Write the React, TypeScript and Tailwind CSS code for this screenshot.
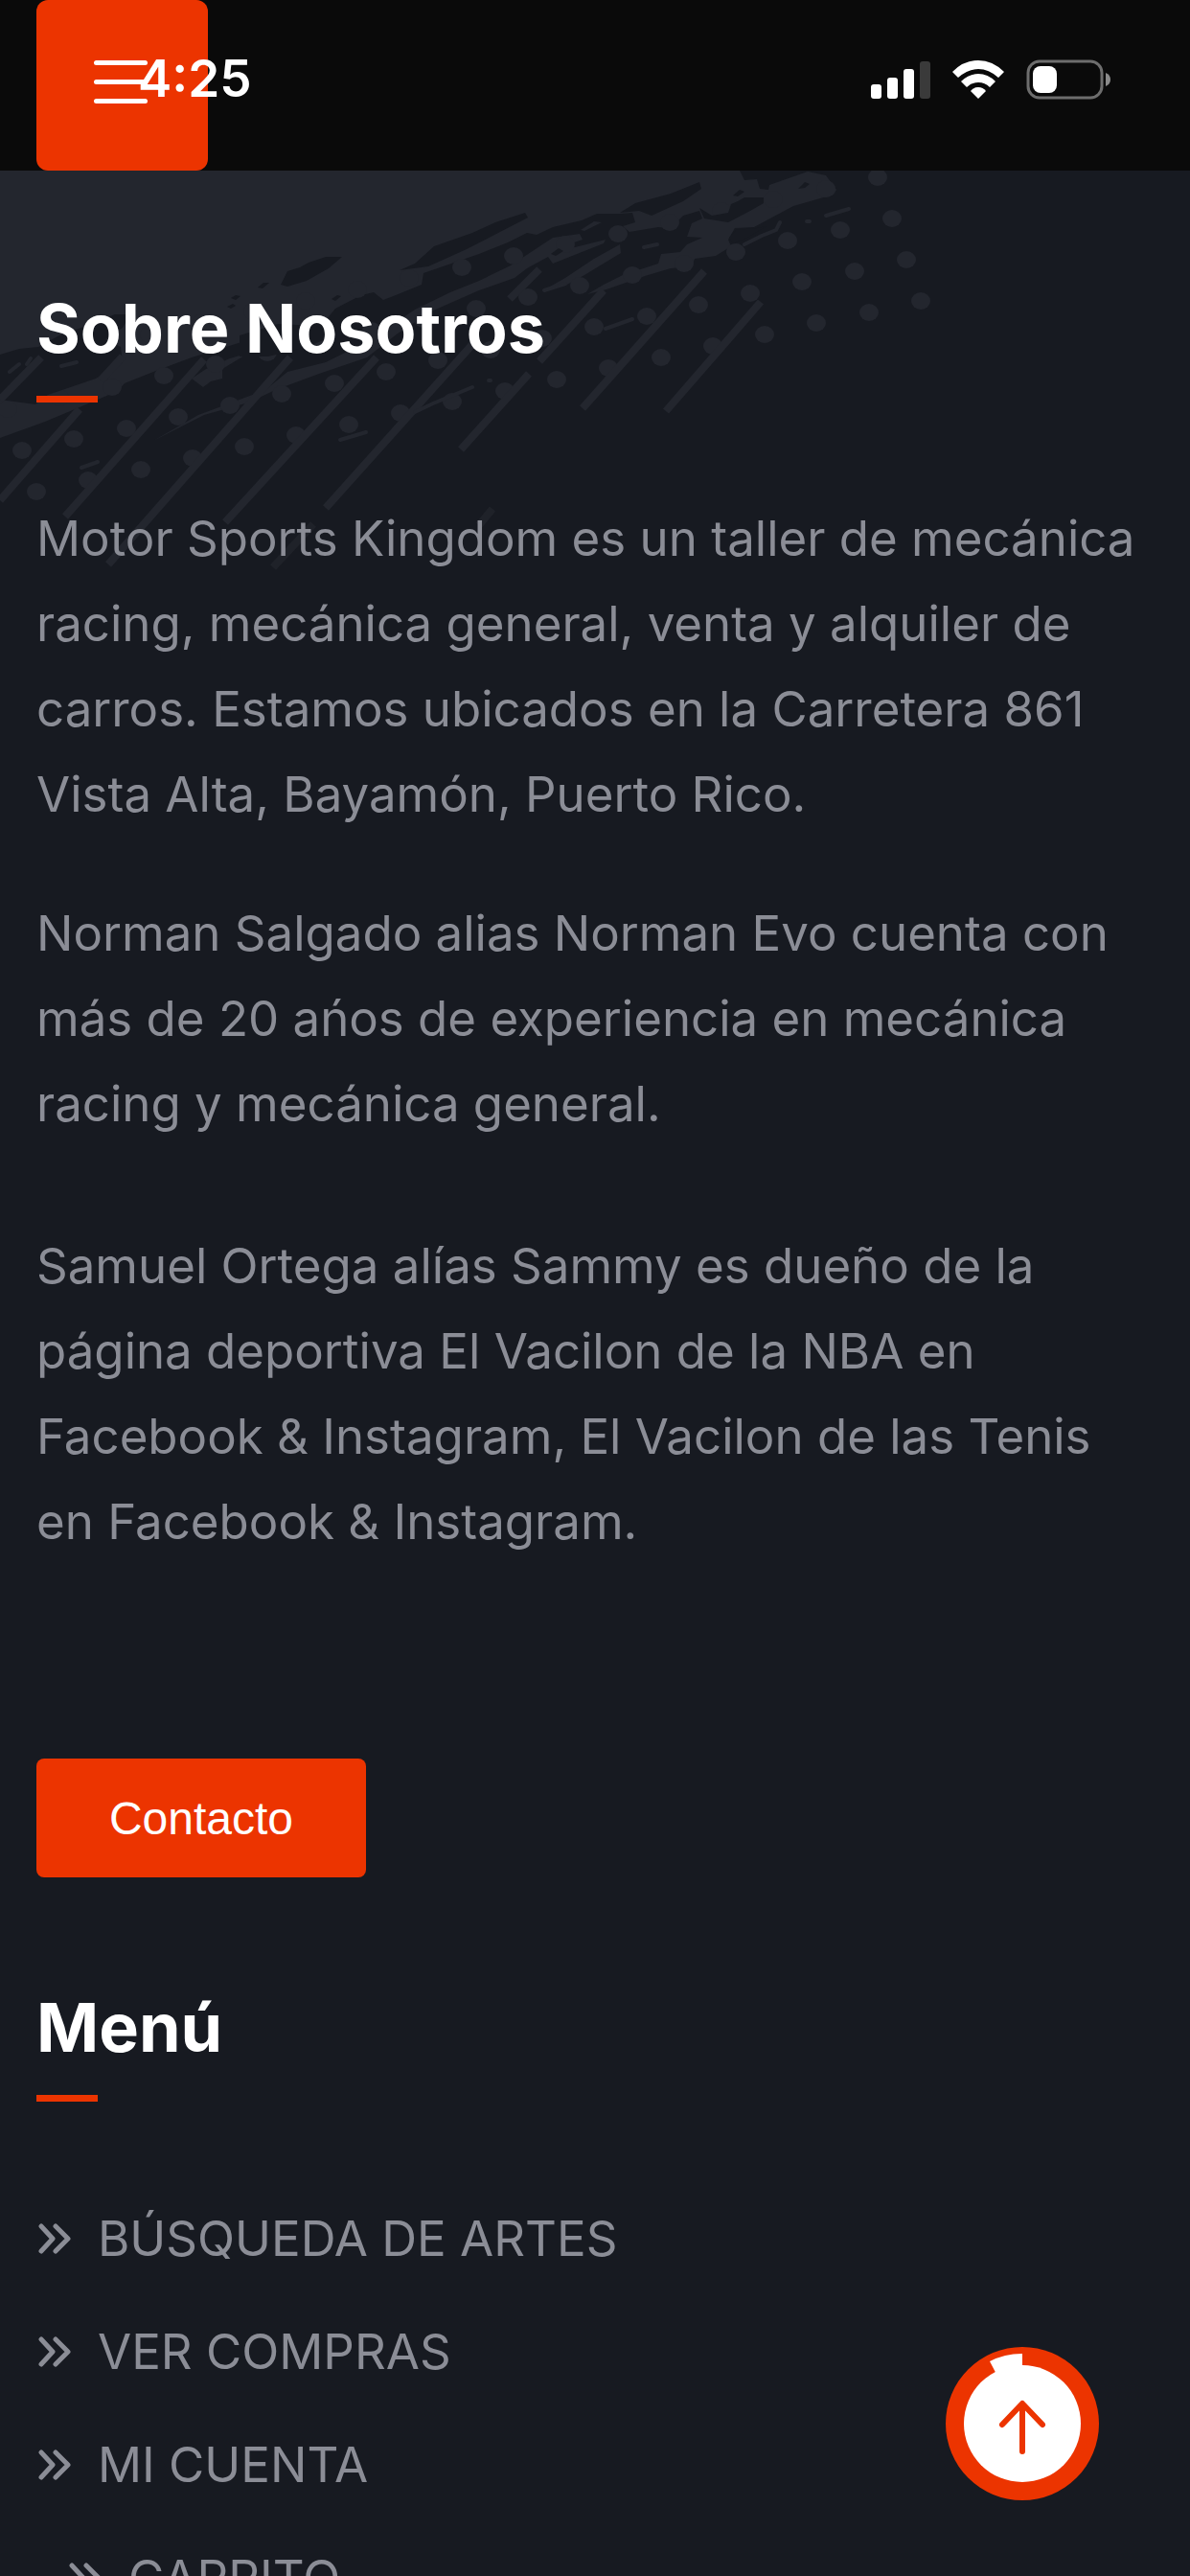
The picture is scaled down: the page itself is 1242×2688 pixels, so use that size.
import type { ReactNode } from "react";

const menuItems = [
  { label: "BÚSQUEDA DE ARTES", nested: false },
  { label: "VER COMPRAS", nested: false },
  { label: "MI CUENTA", nested: false },
  { label: "CARRITO", nested: true },
];

// Halftone grid: four rows of dots running down to the left
const dots = [0, 1, 2, 3].flatMap((row) =>
  Array.from({ length: 18 }, (_, i) => ({
    x: Math.round(961 - row * 15 - i * 54.3),
    y: Math.round(314 - row * 43 + i * 11.7),
  }))
);

const TireTexture = () => (
  <svg
    className="pointer-events-none absolute left-0 top-0 h-[430px] w-[980px]"
    viewBox="0 178 980 430"
    fill="none"
    aria-hidden="true"
  >
    <g fill="#23262e">
      <path d="M0 178H772L777 188 790 187 793 197 802 198 803 193 843 179 862 183 873 198 870 203 828 215 800 230 787 237 767 238 760 250 763 257 747 267 725 270 722 278 700 280 673 288 633 302 613 307 630 297 650 287 687 275 690 265 710 263 717 255 733 248 717 247 722 233 733 228 730 220 713 225 700 238 687 237 657 242 650 236 663 232 660 222 647 223 623 223 607 230 577 237 560 245 550 243 530 253 500 265 442 285 440 297 413 308 400 313 390 305 377 308 350 322 340 334 300 345 262 354 236 362 200 373 160 388 130 400 123 408 90 422 47 440 0 457Z" />
      <path d="M160 460 207 433 250 417 277 407 300 388 340 378 372 362 400 345 433 323 470 305 500 293 533 277 577 248 605 244 608 250 590 256 600 258 632 250 630 254 577 275 572 268 550 280 537 290 500 303 450 325 415 348 383 373 333 390 287 407 260 420 213 433Z" />
      <path d="M567 303 590 290 620 270 647 255 648 264 610 287 590 298Z" />
      <path d="M606 240 620 231 628 232 610 241Z" />
      <path d="M200 395 215 385 240 374 260 368 232 385 232 395 220 398 212 404Z" />
      {dots.map((dot) => (
        <ellipse key={`${dot.x}-${dot.y}`} cx={dot.x} cy={dot.y} rx="10" ry="9" />
      ))}
    </g>
    <g fill="#171a21">
      <path d="M417 282 433 275 453 257 493 243 517 232 548 222 551 227 520 243 487 260 447 278Z" />
      <path d="M647 222 663 212 700 202 730 190 732 197 713 210 680 225 667 220Z" />
      <path d="M730 217 743 225 760 222 763 213 770 210 777 206 797 206 797 212 783 220 760 232 735 228Z" />
      <path d="M765 204 772 198 777 200 770 205Z" />
      <path d="M833 197 840 190 845 192 840 196Z" />
      <path d="M761 248 768 240 790 238 800 236 780 248 765 254Z" />
      <path d="M575 265 583 259 588 262 580 267Z" />
      <path d="M293 297 300 283 313 279 322 274 340 268 357 268 343 280 320 293 300 299Z" />
      <path d="M269 300 275 295 281 295 274 301Z" />
      <path d="M241 311 246 308 251 309 246 313Z" />
      <path d="M237 320 243 317 246 319 241 322Z" />
      <path d="M346 312 352 308 356 309 350 314Z" />
      <path d="M0 370 20 364 40 362 62 350 90 340 120 328 136 328 128 342 110 354 126 362 128 378 100 395 50 412 37 422 0 417Z" />
      <path d="M250 350 290 338 330 340 350 350 320 362 280 372 250 372Z" />
    </g>
    <g stroke="#23262e" strokeWidth="8" strokeLinecap="butt">
      <path d="M735 283 608 426M794 315 695 429M630 303 563 377M552 390 481 469M563 281 532 312M393 373 235 545M497 355 340 530M303 373 113 589M213 375 68 539M83 427 0 522M43 373 0 417M128 372 105 397" />
      <path d="M327 547 285 592M514 531 500 548" opacity="0.7" />
    </g>
    <g stroke="#23262e" strokeWidth="4" strokeLinecap="round">
      <path d="M355 459 382 451M433 430 452 421 493 404M632 343 660 333M862 225 886 218M777 255 795 246 810 240 814 232M672 258 686 255M85 488 102 482M568 303 590 296M10 388 20 380M28 380 32 374M64 382 80 378M842 231 845 231M510 397 512 397" />
    </g>
  </svg>
);

const SignalIcon = () => (
  <svg className="h-[42px] w-[62px]" viewBox="0 0 62 42" fill="#fff" aria-hidden="true">
    <rect x="0" y="26" width="11" height="15" rx="3" />
    <rect x="17" y="19" width="11" height="22" rx="3" />
    <rect x="34" y="10" width="11" height="31" rx="3" />
    <rect x="51" y="2" width="11" height="39" rx="3" fill="#3a3a3a" />
  </svg>
);

const WifiIcon = () => (
  <svg className="h-[42px] w-[54px]" viewBox="0 0 54 42" fill="#fff" aria-hidden="true">
    <path d="M0 13Q12 1 27 1T54 13L48 19Q38 10 27 10T6 19Z" />
    <path d="M9 23Q17 15 27 15T45 23L39 29Q34 24 27 24T15 29Z" />
    <path d="M19 33Q22 29 27 29T35 33L27 41Z" />
  </svg>
);

const BatteryIcon = () => (
  <svg className="h-[42px] w-[88px]" viewBox="0 0 88 42" fill="none" aria-hidden="true">
    <rect x="2" y="2" width="77" height="38" rx="12" stroke="#6d6d6d" strokeWidth="3" />
    <rect x="7" y="7" width="25" height="28" rx="8" fill="#fff" />
    <path d="M83 14Q88 16 88 21T83 28Z" fill="#8a8a8a" />
  </svg>
);

const ChevronsIcon = () => (
  <svg
    className="h-8 w-9 shrink-0"
    viewBox="0 0 36 32"
    fill="none"
    stroke="currentColor"
    strokeWidth="5"
    strokeLinecap="round"
    strokeLinejoin="round"
    aria-hidden="true"
  >
    <path d="M5 3 17 16 5 29M20 3 33 16 20 29" />
  </svg>
);

const SectionTitle = ({ children }: { children: ReactNode }) => (
  <>
    <h2 className="text-[70px] leading-[84px] font-bold text-white">{children}</h2>
    <div className="mt-7 h-[7px] w-16 bg-[#ec3400]" />
  </>
);

const Header = () => (
  <header className="relative z-10 h-[178px] shrink-0 bg-[#0a0a0a] px-[38px]">
    <button
      type="button"
      aria-label="Abrir menú"
      className="flex h-[178px] w-[179px] items-center rounded-xl bg-[#ec3400] pb-2 pl-[60px]"
    >
      <span className="flex w-14 flex-col gap-[15px]">
        <span className="h-[5px] rounded-full bg-white" />
        <span className="h-[5px] rounded-full bg-white" />
        <span className="h-[5px] rounded-full bg-white" />
      </span>
    </button>

    {/* Status bar sits on top of the header */}
    <div className="pointer-events-none absolute inset-x-0 top-0 flex h-[165px] items-center justify-between pr-[83px] pl-36 text-white">
      <span className="text-[53px] font-semibold">4:25</span>
      <div className="flex items-center gap-[23px]">
        <SignalIcon />
        <WifiIcon />
        <BatteryIcon />
      </div>
    </div>
  </header>
);

const BackToTop = () => (
  <button
    type="button"
    aria-label="Volver arriba"
    className="fixed right-[95px] bottom-[79px] z-20 size-40 rounded-full"
  >
    <svg viewBox="0 0 160 160" fill="none" aria-hidden="true">
      <circle cx="80" cy="80" r="80" fill="#ec3400" />
      <circle cx="80" cy="80" r="61" fill="#fff" />
      <path d="M80 80V7A73 73 0 0 0 46 15Z" fill="#fff" />
      <path
        d="M80 109V60M59 81 80 59 101 81"
        stroke="#ec3400"
        strokeWidth="6"
        strokeLinecap="round"
        strokeLinejoin="round"
      />
    </svg>
  </button>
);

export default function App() {
  return (
    <div className="flex h-screen flex-col overflow-hidden bg-[#171a21] font-['Inter','Liberation_Sans',sans-serif] text-[51px] leading-[89px] text-[#8b8d96]">
      <Header />

      <main className="relative min-h-0 flex-1 overflow-y-auto px-[38px] pt-[123px] [scrollbar-width:none]">
        <TireTexture />

        <section className="relative">
          <SectionTitle>Sobre Nosotros</SectionTitle>
          <p className="mt-[97px]">
            Motor Sports Kingdom es un taller de mecánica racing, mecánica general, venta y alquiler de
            carros. Estamos ubicados en la Carretera 861 Vista Alta, Bayamón, Puerto Rico.
          </p>
          <p className="mt-14">
            Norman Salgado alias Norman Evo cuenta con más de 20 ańos de experiencia en mecánica racing y
            mecánica general.
          </p>
          <p className="mt-20">
            Samuel Ortega alías Sammy es dueño de la página deportiva El Vacilon de la NBA en Facebook &
            Instagram, El Vacilon de las Tenis en Facebook & Instagram.
          </p>
          <a
            href="#contacto"
            className="mt-[203px] flex h-[124px] w-[344px] items-center justify-center rounded-lg bg-[#ec3400] font-['Liberation_Sans',sans-serif] text-[48px] text-white"
          >
            Contacto
          </a>
        </section>

        <nav aria-label="Menú" className="relative mt-[115px]">
          <SectionTitle>Menú</SectionTitle>
          <ul className="mt-[98px] flex flex-col gap-[29px]">
            {menuItems.map((item) => (
              <li key={item.label} className={item.nested ? "pl-8" : ""}>
                <a href="#menu" className="flex items-center gap-7">
                  <ChevronsIcon />
                  {item.label}
                </a>
              </li>
            ))}
          </ul>
        </nav>
      </main>

      <BackToTop />
    </div>
  );
}
